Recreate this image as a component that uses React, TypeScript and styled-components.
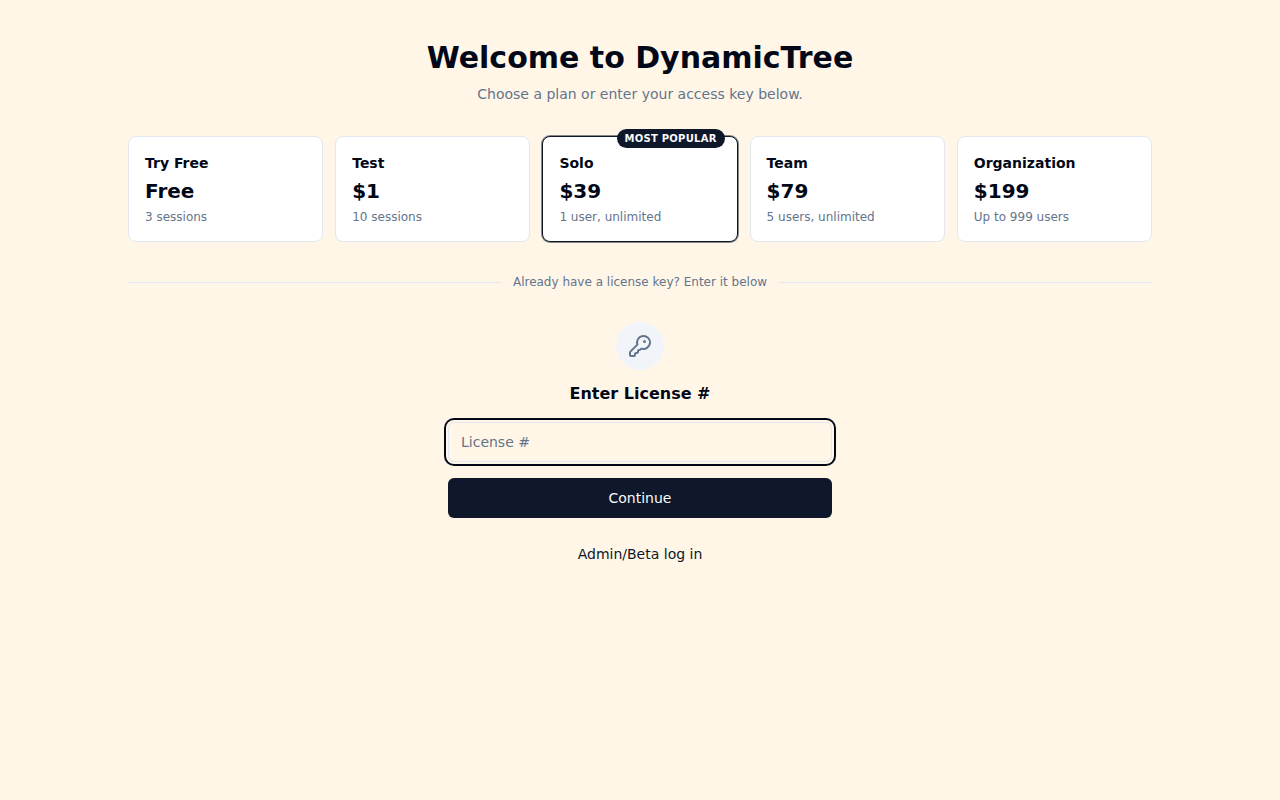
import React from "react";
import styled, { createGlobalStyle, css } from "styled-components";
import { KeyRound } from "lucide-react";

const GlobalStyle = createGlobalStyle`
  *, *::before, *::after { box-sizing: border-box; }
  body {
    margin: 0;
    background: #fff6e7;
    color: #020817;
    font-family: "DejaVu Sans", sans-serif;
    line-height: 1.5;
  }
  h1, h2, p { margin: 0; }
`;

const Page = styled.main`
  display: flex;
  flex-direction: column;
  align-items: center;
  min-height: 100vh;
  padding: 40px 16px;
`;

const Content = styled.div`
  width: 100%;
  max-width: 1024px;
`;

const Header = styled.header`
  text-align: center;
  margin-bottom: 32px;
`;

const Title = styled.h1`
  font-size: 30px;
  line-height: 36px;
  font-weight: 700;
`;

const Subtitle = styled.p`
  margin-top: 8px;
  font-size: 14px;
  line-height: 20px;
  color: #64748b;
`;

const Plans = styled.section`
  display: grid;
  grid-template-columns: repeat(5, minmax(0, 1fr));
  gap: 12px;
`;

const PlanCard = styled.button<{ $popular?: boolean }>`
  position: relative;
  display: flex;
  flex-direction: column;
  align-items: flex-start;
  padding: 16px;
  border: 1px solid #e2e8f0;
  border-radius: 8px;
  background: #fff;
  color: inherit;
  font-family: inherit;
  text-align: left;
  cursor: pointer;
  ${(p) =>
    p.$popular &&
    css`
      border-color: #0f172a;
      box-shadow: 0 0 0 1px rgba(15, 23, 42, 0.5);
    `}
`;

const PopularBadge = styled.span`
  position: absolute;
  top: -8px;
  right: 12px;
  padding: 2px 8px;
  border-radius: 999px;
  background: #0f172a;
  color: #f8fafc;
  font-size: 10px;
  line-height: 15px;
  font-weight: 600;
  letter-spacing: 0.25px;
  text-transform: uppercase;
`;

const PlanName = styled.span`
  font-size: 14px;
  line-height: 20px;
  font-weight: 600;
`;

const PlanPrice = styled.span`
  margin-top: 4px;
  font-size: 20px;
  line-height: 28px;
  font-weight: 700;
`;

const PlanDetail = styled.span`
  margin-top: 4px;
  font-size: 12px;
  line-height: 16px;
  color: #64748b;
`;

const Divider = styled.div`
  display: flex;
  align-items: center;
  gap: 12px;
  margin: 32px 0;
  color: #64748b;
  font-size: 12px;
  line-height: 16px;
  &::before,
  &::after {
    content: "";
    flex: 1;
    height: 1px;
    background: #e2e8f0;
  }
`;

const LicenseForm = styled.form`
  display: flex;
  flex-direction: column;
  align-items: center;
  width: 384px;
  margin: 0 auto;
`;

const IconCircle = styled.div`
  display: flex;
  align-items: center;
  justify-content: center;
  width: 48px;
  height: 48px;
  border-radius: 50%;
  background: #f1f5f9;
  color: #64748b;
`;

const FormTitle = styled.h2`
  margin-top: 12px;
  font-size: 16px;
  line-height: 24px;
  font-weight: 600;
`;

const LicenseInput = styled.input`
  width: 100%;
  height: 40px;
  margin-top: 16px;
  padding: 8px 12px;
  border: 1px solid #e2e8f0;
  border-radius: 6px;
  outline: none;
  background: #fff6e7;
  box-shadow: 0 0 0 2px #fff6e7, 0 0 0 4px #020817;
  color: inherit;
  font: 14px/20px "DejaVu Sans", sans-serif;
  &::placeholder {
    color: #64748b;
    opacity: 1;
  }
`;

const ContinueButton = styled.button`
  width: 100%;
  height: 40px;
  margin-top: 16px;
  border: 0;
  border-radius: 6px;
  background: #0f172a;
  color: #f8fafc;
  font: 500 14px/20px "DejaVu Sans", sans-serif;
  cursor: pointer;
`;

const AdminLink = styled.button`
  height: 40px;
  margin-top: 16px;
  padding: 0 16px;
  border: 0;
  background: none;
  color: #0f172a;
  font: 500 14px/20px "DejaVu Sans", sans-serif;
  cursor: pointer;
`;

const plans = [
  { name: "Try Free", price: "Free", detail: "3 sessions" },
  { name: "Test", price: "$1", detail: "10 sessions" },
  { name: "Solo", price: "$39", detail: "1 user, unlimited", popular: true },
  { name: "Team", price: "$79", detail: "5 users, unlimited" },
  { name: "Organization", price: "$199", detail: "Up to 999 users" },
];

export default function App() {
  return (
    <>
      <GlobalStyle />
      <Page>
        <Content>
          <Header>
            <Title>Welcome to DynamicTree</Title>
            <Subtitle>Choose a plan or enter your access key below.</Subtitle>
          </Header>
          <Plans>
            {plans.map((plan) => (
              <PlanCard key={plan.name} type="button" $popular={plan.popular}>
                {plan.popular && <PopularBadge>Most popular</PopularBadge>}
                <PlanName>{plan.name}</PlanName>
                <PlanPrice>{plan.price}</PlanPrice>
                <PlanDetail>{plan.detail}</PlanDetail>
              </PlanCard>
            ))}
          </Plans>
          <Divider>Already have a license key? Enter it below</Divider>
          <LicenseForm onSubmit={(e) => e.preventDefault()}>
            <IconCircle>
              <KeyRound size={24} />
            </IconCircle>
            <FormTitle>Enter License #</FormTitle>
            <LicenseInput placeholder="License #" aria-label="License #" />
            <ContinueButton type="submit">Continue</ContinueButton>
            <AdminLink type="button">Admin/Beta log in</AdminLink>
          </LicenseForm>
        </Content>
      </Page>
    </>
  );
}
